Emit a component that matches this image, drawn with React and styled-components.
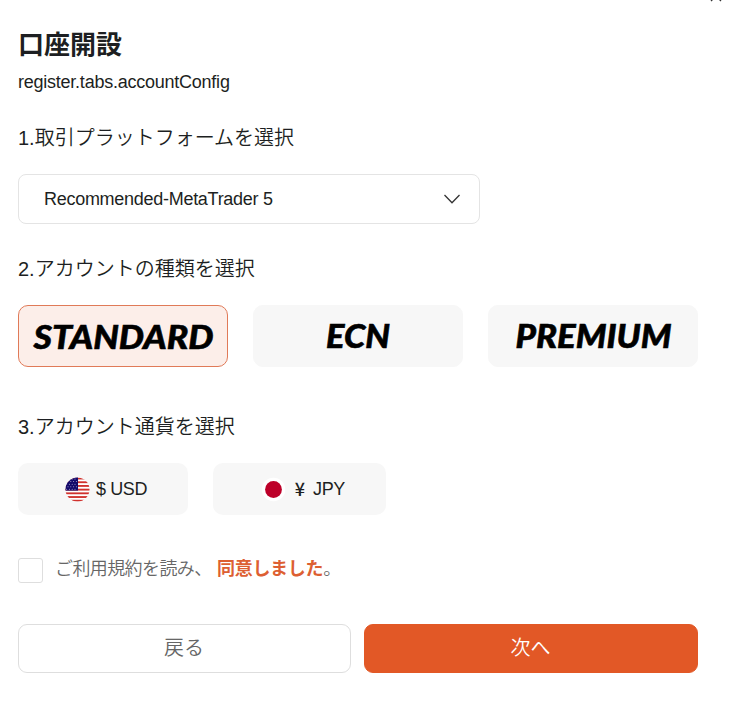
import React from 'react';
import styled, { createGlobalStyle } from 'styled-components';

const GlobalStyle = createGlobalStyle`
  * {
    box-sizing: border-box;
  }

  body {
    margin: 0;
    background: #fff;
    color: #1d1f22;
    font-family: 'Liberation Sans', 'Noto Sans CJK JP', sans-serif;
    overflow: hidden;
  }
`;

const Page = styled.main`
  position: relative;
  width: 750px;
  height: 711px;
  padding: 28px 52px 0 18px;
  overflow: hidden;
`;

const CloseIcon = styled.svg`
  position: absolute;
  top: -10px;
  left: 710px;
`;

const Title = styled.h1`
  margin: 0;
  height: 34px;
  font-size: 26px;
  line-height: 34px;
  font-weight: 700;
`;

const Subtitle = styled.p`
  margin: 8px 0 0;
  height: 24px;
  font-size: 18px;
  line-height: 24px;
  letter-spacing: -0.24px;
`;

const SectionTitle = styled.h2`
  margin: ${({ $top }) => $top}px 0 21px;
  height: 30px;
  font-size: 20px;
  line-height: 30px;
  font-weight: 350;
  white-space: nowrap;
`;

const Select = styled.button`
  display: flex;
  align-items: center;
  justify-content: space-between;
  width: 462px;
  height: 50px;
  padding: 0 19px 0 25px;
  border: 1px solid #e4e4e4;
  border-radius: 8px;
  background: #fff;
  color: inherit;
  font-family: inherit;
  font-size: 18px;
  letter-spacing: -0.28px;
`;

const Row = styled.div`
  display: flex;
  gap: 25px;
`;

const AccountCard = styled.button`
  display: flex;
  align-items: center;
  justify-content: center;
  width: 210px;
  height: 62px;
  padding: 0;
  border: 1px solid ${({ $active }) => ($active ? '#e07a58' : '#f7f7f7')};
  border-radius: 10px;
  background: ${({ $active }) => ($active ? '#fceee9' : '#f7f7f7')};
`;

const Wordmark = styled.text`
  font-family: Lato, sans-serif;
  font-size: 33px;
  font-weight: 900;
  font-style: italic;
  fill: #000;
  stroke: #000;
  stroke-width: 0.6px;
`;

const CurrencyCard = styled.button`
  display: flex;
  align-items: center;
  justify-content: center;
  gap: ${({ $gap }) => $gap}px;
  width: ${({ $width }) => $width}px;
  height: 52px;
  padding: 0 0 0 ${({ $shift }) => $shift}px;
  border: 0;
  border-radius: 10px;
  background: #f7f7f7;
  color: inherit;
  font-family: inherit;
  font-size: 18px;
  letter-spacing: -0.4px;
`;

const Yen = styled.span`
  padding-bottom: 3px;
  font-family: 'Noto Sans CJK JP', sans-serif;
  font-size: 18px;
  line-height: 20px;
  font-weight: 500;
`;

const Terms = styled.label`
  display: flex;
  align-items: center;
  height: 25px;
  margin-top: 43px;
  color: #666;
  font-size: 18px;
  font-weight: 350;
  white-space: nowrap;
`;

const Checkbox = styled.input`
  appearance: none;
  width: 25px;
  height: 25px;
  margin: 0 12px 0 0;
  border: 1px solid #dedede;
  border-radius: 3px;
`;

const TermsText = styled.span`
  width: 162px;
  line-height: 24px;
  margin-top: -3px;
  letter-spacing: -0.6px;
`;

const TermsLink = styled.span`
  margin-top: -3px;
  color: #dd5f32;
  line-height: 24px;
  font-weight: 700;
  letter-spacing: -0.3px;
`;

const TermsEnd = styled.span`
  margin-top: -3px;
  line-height: 24px;
`;

const Actions = styled.div`
  display: grid;
  grid-template-columns: 333px 334px;
  gap: 13px;
  margin-top: 41px;
`;

const Button = styled.button`
  height: 49px;
  padding: 0 1px 4px 0;
  border: 1px solid ${({ $primary }) => ($primary ? '#e25826' : '#dedede')};
  border-radius: 9px;
  background: ${({ $primary }) => ($primary ? '#e25826' : '#fff')};
  color: ${({ $primary }) => ($primary ? '#fff' : '#666')};
  font-family: inherit;
  font-size: 20px;
  font-weight: 350;
`;

const accounts = [
  { name: 'STANDARD', x: 14.5, y: 42.5, width: 180 },
  { name: 'ECN', x: 72, y: 42, width: 64 },
  { name: 'PREMIUM', x: 26.5, y: 42, width: 156 },
];

const UsFlag = () => (
  <svg width="25" height="25" viewBox="0 0 25 25">
    <defs>
      <clipPath id="us">
        <circle cx="12.5" cy="12.5" r="12" />
      </clipPath>
    </defs>
    <g clipPath="url(#us)">
      <rect width="25" height="25" fill="#fff" />
      {[0, 1, 2, 3, 4, 5, 6].map((i) => (
        <rect key={i} y={0.6 + i * 3.7} width="25" height="1.85" fill="#d0312d" />
      ))}
      <rect width="13" height="13.6" fill="#13096b" />
      {[2, 4.6, 7.2, 9.8, 12.2].map((y, i) =>
        [1.6, 4.4, 7.2, 10].map((x) => (
          <circle key={`${x}-${y}`} cx={x + (i % 2) * 1.4} cy={y} r="0.5" fill="#b9b5dc" />
        ))
      )}
    </g>
  </svg>
);

const JpFlag = () => (
  <svg width="25" height="25" viewBox="0 0 25 25">
    <circle cx="12.5" cy="12.5" r="11.8" fill="#fff" />
    <circle cx="12.5" cy="12.5" r="8.4" fill="#bd0029" />
  </svg>
);

const App = () => {
  return (
    <>
      <GlobalStyle />
      <Page>
        <CloseIcon width="12" height="12" viewBox="0 0 12 12">
          <path d="M1 1l10 10M11 1L1 11" stroke="#333" strokeWidth="1.3" />
        </CloseIcon>

        <Title>口座開設</Title>
        <Subtitle>register.tabs.accountConfig</Subtitle>

        <SectionTitle $top={29}>1.取引プラットフォームを選択</SectionTitle>
        <Select>
          <span>Recommended-MetaTrader 5</span>
          <svg width="16" height="10" viewBox="0 0 16 10">
            <path d="M0.5 1L8 8.7L15.5 1" fill="none" stroke="#333" strokeWidth="1.3" />
          </svg>
        </Select>

        <SectionTitle $top={30}>2.アカウントの種類を選択</SectionTitle>
        <Row>
          {accounts.map((account) => (
            <AccountCard key={account.name} $active={account.name === 'STANDARD'}>
              <svg width="208" height="60" viewBox="0 0 208 60">
                <Wordmark
                  x={account.x}
                  y={account.y}
                  textLength={account.width}
                  lengthAdjust="spacingAndGlyphs"
                >
                  {account.name}
                </Wordmark>
              </svg>
            </AccountCard>
          ))}
        </Row>

        <SectionTitle $top={45}>3.アカウント通貨を選択</SectionTitle>
        <Row>
          <CurrencyCard $width={170} $gap={6} $shift={6}>
            <UsFlag />
            <span>$ USD</span>
          </CurrencyCard>
          <CurrencyCard $width={173} $gap={8.5} $shift={7}>
            <JpFlag />
            <Yen>¥</Yen>
            <span>JPY</span>
          </CurrencyCard>
        </Row>

        <Terms>
          <Checkbox type="checkbox" />
          <TermsText>ご利用規約を読み、</TermsText>
          <TermsLink>同意しました</TermsLink>
          <TermsEnd>。</TermsEnd>
        </Terms>

        <Actions>
          <Button>戻る</Button>
          <Button $primary>次へ</Button>
        </Actions>
      </Page>
    </>
  );
};

export default App;
